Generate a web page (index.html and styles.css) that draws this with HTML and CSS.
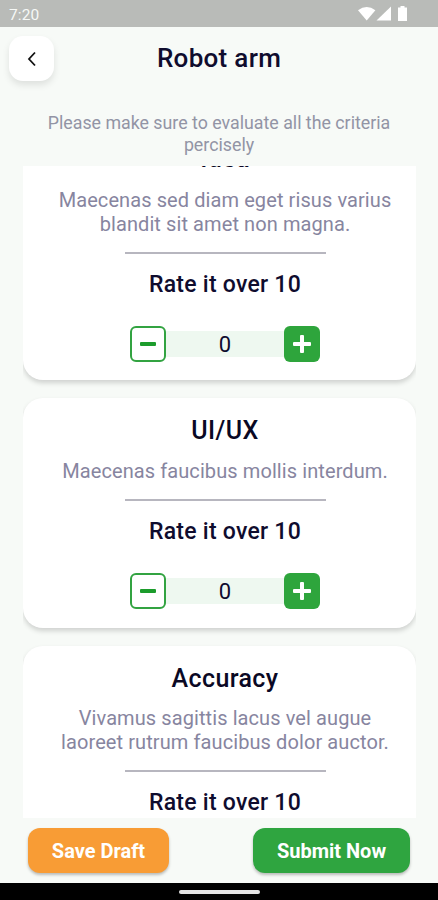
FILE: index.html
```html
<!DOCTYPE html>
<html lang="en">
<head>
<meta charset="utf-8">
<title>Robot arm</title>
<link rel="stylesheet" href="styles.css">
</head>
<body>
<div class="screen">
  <div class="status">
    <span class="time">7:20</span>
    <svg class="status-icons" width="50" height="16" viewBox="0 0 50 16">
      <path d="M0 4.200Q8.700-2.200 17.400 4.200L8.700 14.500Z"/>
      <path d="M18.500 14.500L33 .5V14.500Z"/>
      <path d="M42.500 0h4v1.500h2.500v13.500h-9V1.500h2.500z"/>
    </svg>
  </div>
  <header class="header">
    <button class="back" aria-label="Back">
      <svg width="10" height="16" viewBox="0 0 10 16"><path d="M8 1.500L2 8l6 6.500"/></svg>
    </button>
    <h1>Robot arm</h1>
  </header>
  <p class="hint">Please make sure to evaluate all the criteria<br>percisely</p>
  <main class="list">
    <section class="card first">
      <h2>Idea</h2>
      <p class="desc">Maecenas sed diam eget risus varius<br>blandit sit amet non magna.</p>
      <hr>
      <h3>Rate it over 10</h3>
      <div class="stepper">
        <button class="minus" aria-label="Less"></button><span>0</span><button class="plus" aria-label="More"></button>
      </div>
    </section>
    <section class="card">
      <h2>UI/UX</h2>
      <p class="desc">Maecenas faucibus mollis interdum.</p>
      <hr>
      <h3>Rate it over 10</h3>
      <div class="stepper">
        <button class="minus" aria-label="Less"></button><span>0</span><button class="plus" aria-label="More"></button>
      </div>
    </section>
    <section class="card last">
      <h2>Accuracy</h2>
      <p class="desc">Vivamus sagittis lacus vel augue<br>laoreet rutrum faucibus dolor auctor.</p>
      <hr>
      <h3>Rate it over 10</h3>
    </section>
  </main>
  <footer class="actions">
    <button class="btn draft">Save Draft</button>
    <button class="btn submit">Submit Now</button>
  </footer>
  <div class="navbar"><span></span></div>
</div>
</body>
</html>
```
FILE: styles.css
```css
* { box-sizing: border-box; margin: 0; padding: 0; }
body { font-family: Roboto, sans-serif; background: #f7faf7; color: #0f0c2e; }
button { border: 0; font-family: inherit; }
.screen { width: 438px; height: 900px; display: flex; flex-direction: column; overflow: hidden; }
.status { height: 27px; flex: none; background: #b9bbb8; display: flex; justify-content: space-between; padding: 6px 30px 0 9px; }
.time { font-size: 15.500px; line-height: 18px; color: #f6f8f6; letter-spacing: .1px; }
.status-icons { fill: #fff; }
.header { height: 75px; flex: none; display: grid; grid-template-columns: 45px 1fr 45px; padding: 9px 9px 0; }
.back { width: 45px; height: 45px; border-radius: 14px; background: #fff; box-shadow: 0 4px 7px rgba(0,0,0,.1); display: flex; align-items: center; justify-content: center; }
.back svg { fill: none; stroke: #111; stroke-width: 1.800; }
h1 { font-size: 26px; font-weight: 500; line-height: 45px; text-align: center; letter-spacing: .3px; }
.hint { height: 64px; flex: none; padding-top: 10px; text-align: center; font-size: 17.800px; line-height: 22px; color: #9294a5; }
.list { height: 652px; flex: none; margin: 0 22px 0 23px; overflow: hidden; display: flex; flex-direction: column; gap: 18px; }
.card { flex: none; height: 230px; background: #fff; border-radius: 20px; box-shadow: 0 3px 5px rgba(0,0,0,.16); padding: 18px 0 0 11px; display: flex; flex-direction: column; align-items: center; text-align: center; }
.card.first { height: 253px; margin-top: -39px; padding-top: 17px; }
.card.first .desc { margin-top: 14px; }
.card.last .desc { margin-top: 12px; }
h2 { font-size: 25px; font-weight: 500; line-height: 30px; letter-spacing: .4px; color: #0a0824; }
.desc { margin-top: 13px; font-size: 20px; line-height: 24px; color: #8785a0; letter-spacing: .09px; }
hr { flex: none; width: 201px; height: 2px; border: 0; background: #b7b6bf; margin-top: 16px; }
h3 { font-size: 23px; font-weight: 500; line-height: 26px; margin-top: 18px; letter-spacing: .25px; }
.stepper { display: flex; align-items: center; margin-top: 28px; }
.stepper span { width: 118px; height: 26px; background: #eef8f0; font-size: 22px; line-height: 27px; }
.minus, .plus { width: 36px; height: 36px; border-radius: 6px; display: grid; place-items: center; place-content: center; }
.minus { border: 2px solid #32a341; background: #fff; }
.plus { background: #2ea53c; }
.minus::before, .plus::before, .plus::after { content: ""; grid-area: 1 / 1; border-radius: 1px; }
.minus::before { width: 16px; height: 4px; background: #1c9c2c; }
.plus::before { width: 18px; height: 3.500px; background: #fff; }
.plus::after { width: 3.500px; height: 18px; background: #fff; }
.actions { height: 65px; flex: none; display: flex; justify-content: space-between; padding: 10px 28px 0; }
.btn { height: 45px; border-radius: 12px; color: #fff; font-size: 20px; font-weight: 700; box-shadow: 0 2px 3px rgba(0,0,0,.25); }
.draft { width: 141px; background: #f89c35; }
.submit { width: 157px; background: #2fa540; }
.navbar { flex: 1; background: #000; display: flex; justify-content: center; padding-top: 7px; }
.navbar span { width: 81px; height: 4px; border-radius: 2px; background: #e4e4e4; }
```
